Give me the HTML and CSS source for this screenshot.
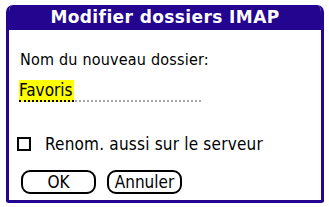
FILE: index.html
```html
<!DOCTYPE html>
<html lang="fr">
<head>
    <meta charset="UTF-8">
    <title>Modifier dossiers IMAP</title>
    <link rel="stylesheet" href="styles.css">
</head>
<body>

    <div class="dialog">
        <div class="dialog-title">Modifier dossiers IMAP</div>
        <div class="dialog-body">
            <p class="label">Nom du nouveau dossier:</p>
            <div class="field">
                <span class="field-text">Favoris</span>
            </div>
            <label class="check-row">
                <span class="checkbox"></span>
                <span>Renom. aussi sur le serveur</span>
            </label>
            <div class="buttons">
                <button class="btn">OK</button>
                <button class="btn">Annuler</button>
            </div>
        </div>
    </div>

</body>
</html>
```

FILE: styles.css
```css
body {
    margin: 0;
    background-color: #ffffff;
    font-family: "DejaVu Sans Condensed", "DejaVu Sans", sans-serif;
    color: #000000;
}

.dialog {
    margin: 5px 0 0 6px;
    width: 318px;
    height: 198px;
    border: 3px solid #23058f;
    border-top: none;
    border-radius: 7px 7px 3px 3px;
    background-color: #ffffff;
    box-sizing: border-box;
    overflow: hidden;
}

.dialog-title {
    height: 25px;
    background-color: #23058f;
    color: #ffffff;
    font-family: "DejaVu Sans", sans-serif;
    font-weight: bold;
    font-size: 17px;
    line-height: 25px;
    text-align: center;
    letter-spacing: 0.4px;
}

.dialog-body {
    padding: 0 0 0 11px;
}

.label {
    margin: 0;
    padding-top: 21px;
    font-size: 16px;
    line-height: 18px;
    letter-spacing: 0.2px;
}

.field {
    margin-top: 11px;
    width: 181px;
    height: 20px;
    border-bottom: 2px dotted #a8a8a8;
}

.field-text {
    display: inline-block;
    background-color: #ffff00;
    font-size: 17px;
    line-height: 20px;
    padding: 0 1px 0 0;
    margin-left: -1px;
    border-bottom: 2px dotted #000000;
}

.check-row {
    display: flex;
    align-items: center;
    margin-top: 33px;
    margin-left: -3px;
    font-size: 17px;
    line-height: 18px;
    letter-spacing: 0.2px;
}

.checkbox {
    width: 10px;
    height: 10px;
    border: 2px solid #000000;
    margin: 0 14px 0 0;
}

.buttons {
    display: flex;
    gap: 11px;
    margin-top: 17px;
    margin-left: 1px;
}

.btn {
    width: 75px;
    height: 24px;
    padding: 0;
    border: 2px solid #000000;
    border-radius: 9px;
    background-color: #ffffff;
    font-family: "DejaVu Sans Condensed", "DejaVu Sans", sans-serif;
    font-size: 17px;
    line-height: 20px;
    color: #000000;
}
```
